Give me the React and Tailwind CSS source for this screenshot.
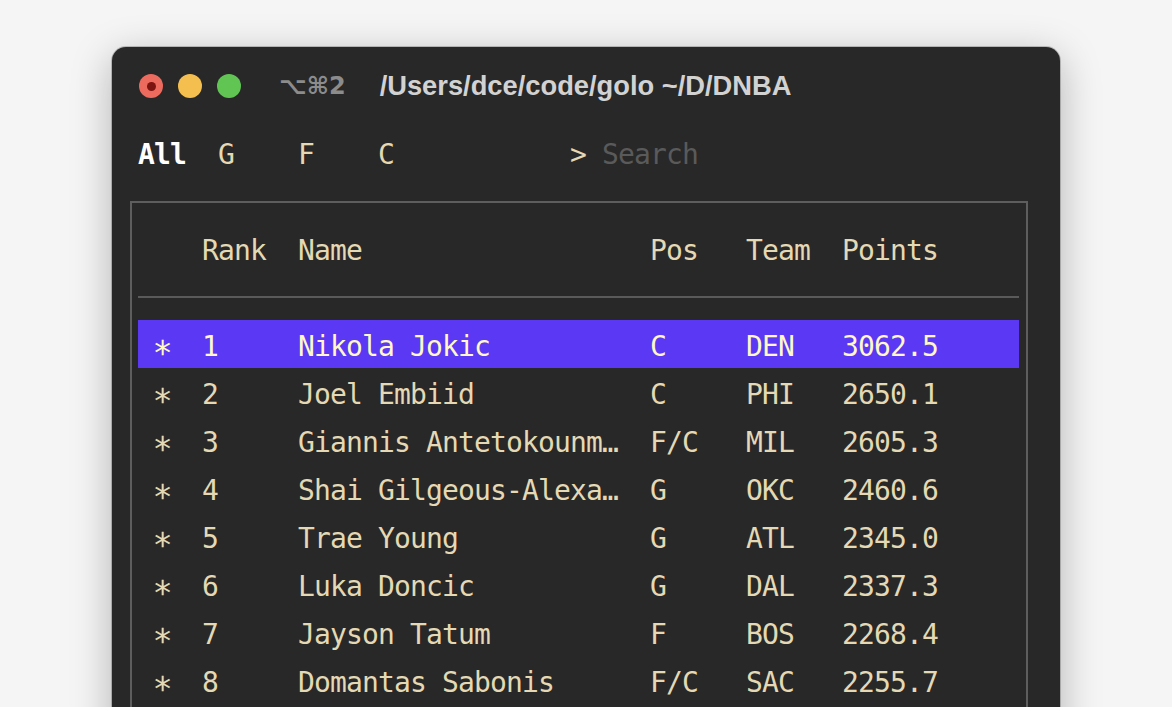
import React from "react";

const players = [
  { rank: 1, name: "Nikola Jokic", pos: "C", team: "DEN", points: "3062.5" },
  { rank: 2, name: "Joel Embiid", pos: "C", team: "PHI", points: "2650.1" },
  { rank: 3, name: "Giannis Antetokounmpo", pos: "F/C", team: "MIL", points: "2605.3" },
  { rank: 4, name: "Shai Gilgeous-Alexander", pos: "G", team: "OKC", points: "2460.6" },
  { rank: 5, name: "Trae Young", pos: "G", team: "ATL", points: "2345.0" },
  { rank: 6, name: "Luka Doncic", pos: "G", team: "DAL", points: "2337.3" },
  { rank: 7, name: "Jayson Tatum", pos: "F", team: "BOS", points: "2268.4" },
  { rank: 8, name: "Domantas Sabonis", pos: "F/C", team: "SAC", points: "2255.7" },
];

// terminal cells are 16px wide
const clip = (s, n) => (s.length > n ? s.slice(0, n - 1) + "…" : s);

const mono = "font-['DejaVu_Sans_Mono','Liberation_Mono',monospace] text-[28px] tracking-[-0.86px] leading-[48px]";

const Row = ({ p, selected }) => (
  <div
    className={`flex h-[48px] items-center whitespace-pre pt-[5px] ${
      selected ? "bg-[#5a38f4] text-[#fff7c6]" : "text-[#e4d9b4]"
    }`}
  >
    <span className="w-[64px] pl-[16px]">
      <span className="inline-block scale-[1.2]">∗</span>
    </span>
    <span className="w-[96px]">{p.rank}</span>
    <span className="w-[352px]">{clip(p.name, 20)}</span>
    <span className="w-[96px]">{p.pos}</span>
    <span className="w-[96px]">{p.team}</span>
    <span>{p.points}</span>
  </div>
);

export default function App() {
  return (
    <div className="h-[707px] overflow-hidden bg-[#f5f5f5] pl-[112px] pt-[47px]">
      <div className="h-[720px] w-[948px] rounded-t-[14px] bg-[#282828] shadow-[0_10px_40px_rgba(0,0,0,0.28)] ring-1 ring-black/20">
        {/* title bar */}
        <div className="flex h-[78px] items-center pl-[27px]">
          <div className="flex items-center gap-[15px]">
            <span className="flex h-[24px] w-[24px] items-center justify-center rounded-full bg-[#ed6a5e]">
              <span className="h-[9px] w-[9px] rounded-full bg-[#7c1410]" />
            </span>
            <span className="h-[24px] w-[24px] rounded-full bg-[#f5bf4f]" />
            <span className="h-[24px] w-[24px] rounded-full bg-[#61c554]" />
          </div>
          <span className="ml-[38px] font-['DejaVu_Sans',sans-serif] text-[24px] font-bold text-[#8c8c8c]">
            ⌥⌘2
          </span>
          <span className="ml-[34px] font-['Liberation_Sans',sans-serif] text-[27.3px] font-bold text-[#d2d2d2]">
            /Users/dce/code/golo ~/D/DNBA
          </span>
        </div>

        <div className="pl-[18px]">
          {/* tabs */}
          <div className={`flex h-[58px] items-center whitespace-pre pl-[8px] pt-[2px] ${mono}`}>
            <span className="w-[80px] font-bold text-white">All</span>
            <span className="w-[80px] text-[#e4d9b4]">G</span>
            <span className="w-[80px] text-[#e4d9b4]">F</span>
            <span className="w-[192px] text-[#e4d9b4]">C</span>
            <span className="w-[32px] text-[#e4d9b4]">&gt;</span>
            <span className="text-[#5a5a5a]">Search</span>
          </div>

          {/* table */}
          <div className={`mt-[18px] h-[600px] w-[898px] border-2 border-[#5e5e5e] pl-[6px] pr-[7px] pt-[23px] ${mono}`}>
            <div className="flex h-[48px] items-center whitespace-pre pt-[2px] text-[#e4d9b4]">
              <span className="w-[64px]" />
              <span className="w-[96px]">Rank</span>
              <span className="w-[352px]">Name</span>
              <span className="w-[96px]">Pos</span>
              <span className="w-[96px]">Team</span>
              <span>Points</span>
            </div>
            <div className="my-[22px] h-[2px] bg-[#5a5a5a]" />
            {players.map((p, i) => (
              <Row key={p.rank} p={p} selected={i === 0} />
            ))}
          </div>
        </div>
      </div>
    </div>
  );
}
